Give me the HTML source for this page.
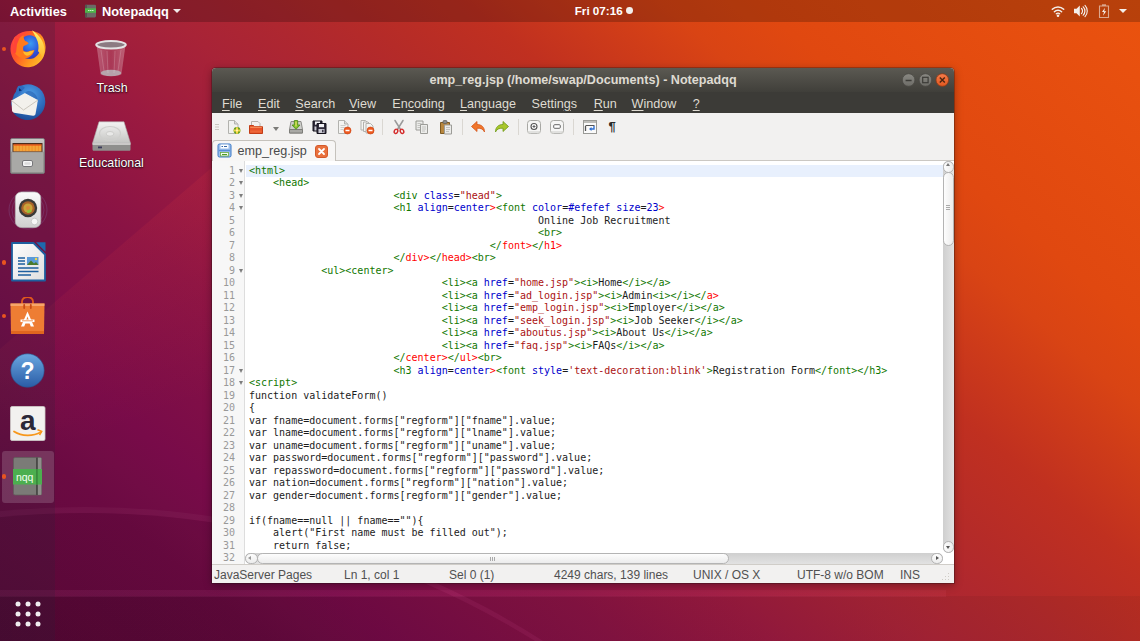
<!DOCTYPE html>
<html lang="en">
<head>
<meta charset="utf-8">
<title>emp_reg.jsp (/home/swap/Documents) - Notepadqq</title>
<style>
*{box-sizing:border-box;margin:0;padding:0}
html,body{width:1140px;height:641px;overflow:hidden}
body{position:relative;font-family:"Liberation Sans","DejaVu Sans",sans-serif;font-size:12px;color:#fff;
 background:#8a1646;}
#wall{position:absolute;left:0;top:0;width:1140px;height:641px;
 background:
  linear-gradient(40deg,#5c083a 0%,#62093d 5.500%,#6b0a42 14%,#710c45 17%,#780b49 20.500%,#8a1344 32.500%,#9b1a40 40.500%,#9e1c3e 42%,#a82337 48%,#ae2730 53%,#b52b28 58%,#c03020 64.500%,#d94414 74.600%,#e04810 79.600%,#e8500f 95%,#ea530e 100%);}
#facet{position:absolute;left:0;top:160px;width:216px;height:340px;clip-path:polygon(216px 4px,0 189px,0 340px,216px 300px);background:linear-gradient(160deg,rgba(255,70,60,.10) 20%,rgba(255,70,60,0) 75%)}
#arc{position:absolute;left:-765px;top:507px;width:1700px;height:1700px;border-radius:50%;background:linear-gradient(90deg,rgba(20,0,10,.07) 0,rgba(20,0,10,.07) 980px,rgba(20,0,10,0) 1160px);border-top:6px solid rgba(255,110,190,.09)}
#band{position:absolute;left:0;top:596px;width:1140px;height:45px;background:linear-gradient(90deg,rgba(0,0,0,.11),rgba(0,0,0,.05))}
#stripe{position:absolute;left:0;top:590px;width:946px;height:7px;background:linear-gradient(90deg,rgba(255,120,200,.08),rgba(255,110,150,.07))}
#topbar{position:absolute;left:0;top:0;width:1140px;height:22px;background:rgba(0,0,0,.21);font-weight:bold;font-size:12.8px;line-height:22px;white-space:nowrap}
#topbar span{position:absolute;top:1px}
#dock{position:absolute;left:0;top:22px;width:55px;height:619px;background:rgba(40,35,55,.2)}
.dk{position:absolute;left:10px;width:36px;height:36px}
.dot{position:absolute;left:1.700px;width:4.600px;height:4.600px;border-radius:50%;background:#e95420}
.desk{position:absolute;width:110px;text-align:center;font-size:12.4px;color:#fff;text-shadow:0 1px 2px rgba(0,0,0,.8),0 0 1px rgba(0,0,0,.8)}
#win{position:absolute;left:212px;top:68px;width:742px;height:515px;background:#f2f1f0;border-radius:4px 4px 0 0;box-shadow:0 2px 9px rgba(0,0,0,.35),0 0 0 1px rgba(40,20,20,.3);overflow:hidden;color:#3c3c3c}
#title{position:absolute;left:0;top:0;width:742px;height:24px;background:linear-gradient(#5b5952,#403f3a);color:#dfdbd2;font-weight:bold;font-size:12.6px;line-height:24px;text-align:center;white-space:nowrap}
#menu{position:absolute;left:0;top:24px;width:742px;height:21px;background:#3c3b37;color:#dfdbd2;font-size:12.6px;line-height:20px;white-space:nowrap}
#menu span{position:absolute;top:1.700px}
#menu u{text-decoration:underline;text-underline-offset:2px}
#tool{position:absolute;left:0;top:45px;width:742px;height:27px;background:#f2f1f0}
#tabs{position:absolute;left:0;top:72px;width:742px;height:21px;background:#f2f1f0;border-bottom:1px solid #cbc8c3}
#tab{position:absolute;left:0px;top:0px;width:124px;height:21px;background:#f7f6f5;border:1px solid #c5c2bc;border-bottom:none;border-radius:4px 4px 0 0;font-size:12.6px;line-height:20px;color:#4a4a4a}
#ed{position:absolute;left:0;top:93px;width:742px;height:403px;background:#fff;overflow:hidden}
#gut{position:absolute;left:0;top:0;width:33px;height:403px;background:#f7f7f7;border-right:1px solid #ddd}
pre{font-family:"DejaVu Sans Mono","Liberation Mono",monospace;font-size:10px;line-height:12.5px}
#ln{position:absolute;left:0;top:3.5px;width:23px;text-align:right;color:#999}
#code{position:absolute;left:37px;top:3.5px;color:#1c1c1c}
#status{position:absolute;left:0;top:496px;width:742px;height:19px;background:#f2f1f0;border-top:1px solid #d0cdc8;font-size:12px;line-height:17px;color:#505050;white-space:nowrap}
#status span{position:absolute;top:1.500px}

#cur{position:absolute;left:34px;top:4px;width:697px;height:12px;background:#e8f0fd}
.fold{position:absolute;left:26.800px;width:0;height:0;margin-top:-.7px;border-left:2.200px solid transparent;border-right:2.200px solid transparent;border-top:4px solid #7d7d7d}
#vs{position:absolute;left:731px;top:0;width:11px;height:392px;background:linear-gradient(90deg,#cfcfcf,#e2e2e2);border-radius:5px}
#vs i,#hs i{position:absolute;display:block;background:linear-gradient(90deg,#fdfdfd,#ececec);border:1px solid #b4b4b4;border-radius:5.5px}
#hs{z-index:3;position:absolute;left:33px;top:392px;width:698px;height:11px;background:linear-gradient(#cfcfcf,#e2e2e2);border-radius:5px}
#hs i{background:linear-gradient(#fdfdfd,#ececec)}
.ar{position:absolute;width:0;height:0;border:2.5px solid transparent}
.ti{position:absolute}
.t{color:#170}.a{color:#00c}.s{color:#a11}.e{color:#f00}
</style>
</head>
<body>
<div id="wall"></div>
<div id="facet"></div><div id="arc"></div><div id="band"></div><div id="stripe"></div>
<div id="topbar">
 <span style="left:10px">Activities</span>
 <span style="left:102px">Notepadqq</span>
 <span style="left:574.700px;top:0;font-size:11.700px">Fri 07:16</span>
 <svg style="position:absolute;left:84px;top:4px" width="13" height="14" viewBox="0 0 13 14"><rect x="1" y=".8" width="11" height="12.600" rx="1.300" fill="#6b6b66"/><rect x="1" y=".8" width="2" height="12.600" fill="#55554f"/><rect x="1" y="4.300" width="11" height="4.500" fill="#4fb54a"/><path d="M4 6.500h5.500" stroke="#c9f0c4" stroke-width="1" stroke-dasharray="1.500 .5"/></svg>
 <i style="position:absolute;left:172.800px;top:9.300px;width:0;height:0;border-left:4.200px solid transparent;border-right:4.200px solid transparent;border-top:4.500px solid #f0eaea"></i>
 <i style="position:absolute;left:625.800px;top:7.100px;width:6.800px;height:6.800px;border-radius:50%;background:#f2efec"></i>
 <svg style="position:absolute;left:1051px;top:4px" width="14" height="14" viewBox="0 0 14 14"><g fill="none" stroke="#f4efea" stroke-linecap="round"><path d="M1.300 5.300a8 8 0 0 1 11.400 0" stroke-width="1.500"/><path d="M3.400 7.700a5 5 0 0 1 7.200 0" stroke-width="1.500"/><path d="M5.300 9.800a2.400 2.400 0 0 1 3.400 0" stroke-width="1.300"/></g><circle cx="7" cy="11.800" r="1.300" fill="#f4efea"/></svg>
 <svg style="position:absolute;left:1073px;top:4px" width="15" height="14" viewBox="0 0 15 14"><path d="M1 4.800h2.500l3.300-3.300v11l-3.300-3.300h-2.500z" fill="#f4efea"/><g fill="none" stroke="#f4efea" stroke-linecap="round"><path d="M8.500 4.500a3.500 3.500 0 0 1 0 5" stroke-width="1.200"/><path d="M10.200 2.800a6 6 0 0 1 0 8.400" stroke-width="1.200"/><path d="M12 1.300a8.300 8.300 0 0 1 0 11.400" stroke-width="1.100"/></g></svg>
 <svg style="position:absolute;left:1098px;top:3px" width="12" height="16" viewBox="0 0 12 16"><path d="M1.500 3h9v11.500h-9z" fill="none" stroke="#dca78e" stroke-width="1.100"/><path d="M4 1.300h4v1.700h-4z" fill="#dca78e"/><path d="M7 4.800l-3 4.300h2l-1 3.700 3.200-4.600h-2z" fill="#f8f3ef"/></svg>
 <i style="position:absolute;left:1119px;top:8.800px;width:0;height:0;border-left:4.200px solid transparent;border-right:4.200px solid transparent;border-top:4.600px solid #f4efea"></i>
</div>
<div id="dock">
<svg style="position:absolute;left:9.500px;top:8.200px" width="37" height="38.500" viewBox="1 0 37 34.800" preserveAspectRatio="none"><defs><linearGradient id="ffo" x1="0" y1=".2" x2="1" y2=".8"><stop offset="0" stop-color="#ff3647"/><stop offset=".35" stop-color="#ff5a26"/><stop offset=".7" stop-color="#ff9a1f"/><stop offset="1" stop-color="#ffc22e"/></linearGradient>
<radialGradient id="ffb" cx=".55" cy=".35" r=".75"><stop offset="0" stop-color="#3c9cf2"/><stop offset=".55" stop-color="#2c55dc"/><stop offset="1" stop-color="#452a9e"/></radialGradient>
<linearGradient id="ffy" x1="0" y1="0" x2="0" y2="1"><stop offset="0" stop-color="#fff26a"/><stop offset="1" stop-color="#ffb52c"/></linearGradient></defs>
<path d="M6 6c-3.800 4-5.500 9.500-4 15 2.200 8.500 10.500 14 19.500 12.500 9-1.500 15.500-9.500 15-18.500-.2-3.500-1.300-6.500-3-9-2.500-3-6-4.500-10-5-6.500-.5-12.500 1-17.500 5z" fill="url(#ffo)"/>
<circle cx="20.500" cy="15.500" r="10.800" fill="url(#ffb)"/>
<path d="M23 .3c5 2.500 9.500 7 11.500 12.500 1.500 4.500 1.200 9-1 13-1-3-2.500-5-4.500-6.500 1-4 .5-8-1.500-11.500-1.200-2.500-2.800-5-4.500-7.500z" fill="url(#ffy)"/>
<path d="M6 6c1.500.2 3 .8 4.200 1.800 1.300-1.500 2.800-2.500 4.500-3-.3 2 .2 3.800 1.500 5.200 1.300.3 2.500 1 3.500 2-1.500 1.500-3.500 2-5 2.500-.8 1.500-.8 3 0 4.500 2.200.8 4.500.8 6.500-.3l4.300-.7c-1 4-4.500 7-9 7.500-5 .5-9.500-2-11.500-6.500-1.500-4-1.200-9 1-13z" fill="#ff7a1c"/>
<path d="M6 6c1.500.2 3 .8 4.200 1.800l-2.200 5-1 7.500-2.200 1c-1.300-5-1-10.500 1.200-15.300z" fill="#ff3d3d" opacity=".9"/>
<path d="M14 19.500c2.500 1 5 1 7-.3l4-.7c-1.500 2.800-4 4.500-7 4.700-1.800 0-3.200-1.200-4-3.700z" fill="#ffbf2e"/></svg>
<svg style="position:absolute;left:8.8px;top:60.5px" width="38" height="38" viewBox="0 0 38 38"><defs><radialGradient id="tbg" cx=".55" cy=".3" r=".85"><stop offset="0" stop-color="#4f9fe8"/><stop offset=".55" stop-color="#2b69ba"/><stop offset="1" stop-color="#143a80"/></radialGradient></defs>
<path d="M10 4c6-4.500 15-3.500 20.500 1.500 6.500 6 7.500 15.500 3 23-3 5-8 8-14 8.500-6 .3-11.500-2.500-15-7l-2.500-9.500 3-9z" fill="url(#tbg)"/>
<path d="M9 3.200c2.500-.8 5-.2 6.800 1.500l-4.300 4.800-4 3.500c-1-3.500-.5-7 1.500-9.800z" fill="#2d6cc0"/>
<path d="M10 5l2.800 2.500-2.800.8z" fill="#0f2f6a"/>
<path d="M2.500 17.500l13.500-7.500 13 7-2.500 14c-.3 1.300-1.200 1.900-2.500 1.700l-19-3c-1.300-.3-1.900-1.100-2-2.400z" fill="#f3f1ec"/>
<path d="M2.500 17.500l12 9.500 14.500-10" fill="none" stroke="#cbc6bd" stroke-width="1"/>
<path d="M16 10l13 7-1 6c2-5 .5-11-4.500-14-2.500-1.500-5.500-1.500-7.500 1z" fill="#2a63b0" opacity=".6"/></svg>
<svg style="position:absolute;left:10.3px;top:115.5px" width="35" height="36" viewBox="0 0 35 36"><defs><linearGradient id="flg" x1="0" y1="0" x2="0" y2="1"><stop offset="0" stop-color="#c9c9c6"/><stop offset="1" stop-color="#8e8e8b"/></linearGradient></defs>
<rect x=".5" y=".5" width="34" height="35" rx="1.500" fill="url(#flg)" stroke="#77777a" stroke-width=".8"/>
<rect x="2.500" y="5" width="30" height="9" fill="#4c2b1b"/>
<rect x="3.500" y="6.500" width="28" height="7" fill="#f0902c"/><path d="M3.500 8h28M3.500 10h28M3.500 12h28" stroke="#f6c04a" stroke-width=".9" stroke-dasharray="2 1.200"/>
<path d="M3.500 7h28" stroke="#e8501c" stroke-width="1.200"/>
<rect x="1.500" y="14" width="32" height="20.500" fill="#a9a9a6" stroke="#8a8a88" stroke-width=".6"/>
<rect x="12.500" y="22.500" width="10" height="6" rx="1.500" fill="#f6f6f6" stroke="#77777a" stroke-width="1"/><rect x="14.500" y="24.300" width="6" height="2.400" fill="#dcdcdc"/></svg>
<svg style="position:absolute;left:8px;top:166.7px" width="40" height="42" viewBox="0 0 40 42"><defs><linearGradient id="rbg" x1="0" y1="0" x2="0" y2="1"><stop offset="0" stop-color="#fbfbfb"/><stop offset="1" stop-color="#cfcfcf"/></linearGradient></defs>
<circle cx="20" cy="21" r="19" fill="none" stroke="#8f8fd0" stroke-width=".6" opacity=".35"/><circle cx="20" cy="21" r="16" fill="none" stroke="#8f8fd0" stroke-width=".6" opacity=".35"/>
<rect x="7.300" y="3" width="25.500" height="35.500" rx="6" fill="url(#rbg)" stroke="#b5b5b5" stroke-width=".7"/>
<circle cx="20" cy="19" r="9.200" fill="#3a3a38"/><circle cx="20" cy="19" r="6.800" fill="#a9632a"/><circle cx="20" cy="19" r="4.600" fill="#c9a43a"/><path d="M20 19l4 3a5 5 0 0 1-5 2z" fill="#8fc43a"/><circle cx="20" cy="19" r="2" fill="#d98a3a"/>
<circle cx="26.500" cy="32.500" r="3.300" fill="#f7f7f7" stroke="#bdbdbd" stroke-width=".7"/></svg>
<svg style="position:absolute;left:10.5px;top:220.3px" width="35.5" height="40" viewBox="0 0 35.5 40"><defs><linearGradient id="wrg" x1="0" y1="0" x2="1" y2="1"><stop offset="0" stop-color="#fdfdfd"/><stop offset="1" stop-color="#dfdfdf"/></linearGradient></defs><path d="M1 1h21.500l11.500 11.500v26h-33z" fill="url(#wrg)" stroke="#1d5f9f" stroke-width="1.800" stroke-linejoin="round"/>
<path d="M25 .3h9.500v9.500z" fill="#1d6aad"/>
<rect x="16" y="15" width="11.500" height="8" fill="#5a9bd8"/><path d="M16 23l4-4.500 3 3 2-1.500 2.500 3z" fill="#4a7a2c"/><circle cx="25" cy="17" r="1.200" fill="#f3d64a"/>
<path d="M7 16h7M7 19h7M7 22h7" stroke="#1d5f9f" stroke-width="1.300"/><path d="M7 26h20.500M7 29.500h20.500M7 33h13" stroke="#1d5f9f" stroke-width="1.500"/></svg>
<svg style="position:absolute;left:10.3px;top:275px" width="35" height="37.5" viewBox="0 0 35 37.5"><path d="M12 9v-4.500a5.500 4.500 0 0 1 11 0v4.500" fill="none" stroke="#e0581c" stroke-width="1.800"/>
<path d="M.5 6.500h34l-.5 30.500h-33z" fill="#ee7d33"/><path d="M.5 6.500h34l-.1 2.500h-33.800z" fill="#f7a56a"/><path d="M1 34h33v3h-33z" fill="#e0661f"/>
<path d="M14.200 8v3M20.800 8v3" stroke="#c84a14" stroke-width="1.800" stroke-linecap="round"/>
<path d="M17.500 14.500l-6.500 15h3.200l1.200-3h4.200l1.200 3h3.200z" fill="#fff"/><path d="M17.500 19.500l-1.400 4h2.800z" fill="#ee7d33"/><path d="M10.500 23.800h14" stroke="#fff" stroke-width="2.600"/><path d="M12 23.800h11" stroke="#ee7d33" stroke-width=".8"/></svg>
<svg style="position:absolute;left:10.1px;top:331.3px" width="35" height="35" viewBox="0 0 35 35"><defs><linearGradient id="hpg" x1="0" y1="0" x2="0" y2="1"><stop offset="0" stop-color="#6aa7e0"/><stop offset="1" stop-color="#2a5ca6"/></linearGradient></defs>
<circle cx="17.500" cy="17.500" r="16.700" fill="url(#hpg)" stroke="#2a558f" stroke-width=".6"/>
<text x="17.500" y="25.500" text-anchor="middle" font-family="Liberation Sans,DejaVu Sans,sans-serif" font-weight="bold" font-size="23" fill="#fff">?</text></svg>
<svg style="position:absolute;left:10px;top:383.5px" width="35.5" height="35" viewBox="0 0 35.5 35"><rect x=".5" y=".5" width="34.500" height="34" rx="1.500" fill="#f2f1ef" stroke="#cfcdc9" stroke-width=".8"/>
<text x="17.700" y="24" text-anchor="middle" font-family="Liberation Sans,DejaVu Sans,sans-serif" font-weight="bold" font-size="28" fill="#2b2838">a</text>
<path d="M4 25.500c8 5 19 5 27 .5" fill="none" stroke="#f7981d" stroke-width="1.800" stroke-linecap="round"/><path d="M27.500 23.800l4.200 1.500-2.200 3.700" fill="none" stroke="#f7981d" stroke-width="1.500"/></svg>
<div style="position:absolute;left:1.500px;top:428.5px;width:52px;height:52px;border-radius:3px;background:rgba(255,255,255,.16)"></div>
<svg style="position:absolute;left:13px;top:435px" width="29" height="38.5" viewBox="0 0 29 38.5"><rect x=".5" y=".5" width="28" height="37.500" rx="1.500" fill="#7b7b77" stroke="#5e5e5a" stroke-width=".7"/><rect x="25" y=".8" width="3.300" height="37" fill="#8f8f8b"/><rect x="23" y=".5" width="1.800" height="37.500" fill="#4a4a47"/>
<rect x="0" y="12" width="29" height="15.500" fill="#4caf4f"/><rect x="23" y="12" width="1.800" height="15.500" fill="#3a8a3d"/>
<text x="11.700" y="23.800" text-anchor="middle" font-family="Liberation Sans,DejaVu Sans,sans-serif" font-size="10.500" fill="#f4fff2">nqq</text></svg>
<i class="dot" style="top:24.7px"></i>
<i class="dot" style="top:238.3px"></i>
<i class="dot" style="top:291.7px"></i>
<i class="dot" style="top:452px"></i>
<svg style="position:absolute;left:14.5px;top:579.2px" width="26" height="26" viewBox="0 0 26 26"><circle cx="3" cy="3" r="2.500" fill="#f1edf0"/><circle cx="3" cy="13" r="2.500" fill="#f1edf0"/><circle cx="3" cy="23" r="2.500" fill="#f1edf0"/><circle cx="13" cy="3" r="2.500" fill="#f1edf0"/><circle cx="13" cy="13" r="2.500" fill="#f1edf0"/><circle cx="13" cy="23" r="2.500" fill="#f1edf0"/><circle cx="23" cy="3" r="2.500" fill="#f1edf0"/><circle cx="23" cy="13" r="2.500" fill="#f1edf0"/><circle cx="23" cy="23" r="2.500" fill="#f1edf0"/></svg>
</div>
<svg style="position:absolute;left:94.5px;top:39.5px" width="32" height="38" viewBox="0 0 32 38"><defs><linearGradient id="trg" x1="0" y1="0" x2="1" y2="0"><stop offset="0" stop-color="#fff" stop-opacity=".28"/><stop offset=".5" stop-color="#fff" stop-opacity=".12"/><stop offset="1" stop-color="#fff" stop-opacity=".3"/></linearGradient></defs>
<path d="M1.500 5l4 29c.5 2.500 20.500 2.500 21 0l4-29z" fill="url(#trg)"/>
<ellipse cx="16" cy="33" rx="10.300" ry="3.300" fill="#b9b4b8" opacity=".85"/>
<ellipse cx="16" cy="4.800" rx="14.800" ry="3.800" fill="#8c7a82" stroke="#e4e2e4" stroke-width="2"/>
<path d="M6 10l3 21M12 11l1 22M20 11l-1 22M26 10l-3 21" stroke="#fff" stroke-opacity=".18" stroke-width="1"/></svg><svg style="position:absolute;left:92px;top:121.3px" width="39" height="30.5" viewBox="0 0 39 30.5"><defs><linearGradient id="hdg" x1="0" y1="0" x2="0" y2="1"><stop offset="0" stop-color="#f4f4f3"/><stop offset="1" stop-color="#c4c4c2"/></linearGradient></defs>
<path d="M7 .8h25l6.500 21.500h-38z" fill="url(#hdg)" stroke="#a9a9a7" stroke-width=".6"/>
<path d="M.5 22.300h38v6c0 1-.5 1.500-1.500 1.500h-35c-1 0-1.500-.5-1.500-1.500z" fill="#8f8f8d"/><path d="M.5 22.300h38v1.500h-38z" fill="#dededc"/>
<ellipse cx="18" cy="12.500" rx="10.500" ry="7" fill="none" stroke="#cfcfcd" stroke-width="1.200"/><ellipse cx="18" cy="12.800" rx="3.800" ry="2.300" fill="#e9e9e8" stroke="#c6c6c4" stroke-width=".8"/>
<rect x="6" y="25.500" width="4" height="1.800" fill="#3a3a5a"/></svg>
<div class="desk" style="left:57px;top:81px">Trash</div>
<div class="desk" style="left:56.500px;top:156px">Educational</div>
<div id="win">
 <div id="title">emp_reg.jsp (/home/swap/Documents) - Notepadqq
  <svg style="position:absolute;left:688px;top:4px" width="52" height="16" viewBox="0 0 52 16">
   <defs><linearGradient id="gb" x1="0" y1="0" x2="0" y2="1"><stop offset="0" stop-color="#8a8983"/><stop offset="1" stop-color="#6d6c67"/></linearGradient>
   <linearGradient id="go" x1="0" y1="0" x2="0" y2="1"><stop offset="0" stop-color="#f47b4a"/><stop offset="1" stop-color="#e2581f"/></linearGradient></defs>
   <circle cx="8.600" cy="8" r="6.300" fill="url(#gb)" stroke="#4b4a45" stroke-width=".8"/><path d="M5.600 8.500h6" stroke="#3d3c38" stroke-width="1.300"/>
   <circle cx="25.400" cy="8" r="6.300" fill="url(#gb)" stroke="#4b4a45" stroke-width=".8"/><rect x="22.700" y="5.300" width="5.400" height="5.400" fill="none" stroke="#3d3c38" stroke-width="1.200"/>
   <circle cx="42.300" cy="8" r="6.300" fill="url(#go)" stroke="#8f3a16" stroke-width=".8"/><path d="M39.800 5.500l5 5M44.800 5.500l-5 5" stroke="#4a2410" stroke-width="1.400"/>
  </svg></div>
 <div id="menu">
  <span style="left:10px"><u>F</u>ile</span>
  <span style="left:46px"><u>E</u>dit</span>
  <span style="left:83.300px"><u>S</u>earch</span>
  <span style="left:136.900px"><u>V</u>iew</span>
  <span style="left:180.300px">En<u>c</u>oding</span>
  <span style="left:248px"><u>L</u>anguage</span>
  <span style="left:319.500px">Settin<u>g</u>s</span>
  <span style="left:381.700px"><u>R</u>un</span>
  <span style="left:419.600px"><u>W</u>indow</span>
  <span style="left:480.700px"><u>?</u></span>
 </div>
 <div id="tool">
<div style="position:absolute;left:3px;top:11px;width:4px;height:1px;background:#c9c6c0;box-shadow:0 2.5px 0 #c9c6c0,0 5px 0 #c9c6c0"></div>
<svg class="ti" style="left:13.5px;top:5.7px" width="16" height="16" viewBox="0 0 16 16"><path d="M2.5 1.5h6l3.5 3.5v9.5h-9.500z" fill="#f1f1ef" stroke="#b2b2ae"/><path d="M8.500 1.500v3.500h3.500" fill="#dcdcd8" stroke="#b2b2ae"/><circle cx="11" cy="11.500" r="3.400" fill="#5a9a1c"/><path d="M11 8.200v6.600M7.700 11.500h6.600" stroke="#f3d64a" stroke-width="2.200"/><circle cx="11" cy="11.500" r="1.100" fill="#fff7b0"/></svg>
<svg class="ti" style="left:36.3px;top:5.7px" width="16" height="16" viewBox="0 0 16 16"><path d="M3.500 2.500h6.500l2 2v5h-8.500z" fill="#f3f1ee" stroke="#b5b2ac"/><path d="M1.500 6.500h4l1 1.200h8v6.800h-13z" fill="#e8542a" stroke="#c23d17"/><path d="M2.200 8.300h11.600" stroke="#f58a55" stroke-width="1.200"/><path d="M2.200 12.500h11.600" stroke="#f0703e" stroke-width="2" opacity=".7"/></svg>
<div style="position:absolute;left:61.300px;top:13.500px;width:0;height:0;border-left:3.500px solid transparent;border-right:3.500px solid transparent;border-top:4px solid #7b7b78"></div>
<svg class="ti" style="left:76.0px;top:5.7px" width="16" height="16" viewBox="0 0 16 16"><path d="M3 2.500h10l1.500 8v3.500h-13v-3.500z" fill="#cfcfcc" stroke="#8d8d89"/><path d="M1.500 10.500h13v3.500h-13z" fill="#a9a9a5" stroke="#7d7d79"/><path d="M6.300 1.500h3.400v4.500h2.300l-4 4.300-4-4.300h2.300z" fill="#7fc12a" stroke="#4e8a12" stroke-width=".8"/><path d="M8 2.500v5" stroke="#f1e56a" stroke-width="1.200"/></svg>
<svg class="ti" style="left:99.4px;top:5.7px" width="16" height="16" viewBox="0 0 16 16"><g transform="translate(1.500,1.500)"><path d="M0.500 0.500h9v10h-9z" fill="#2f2b3a" stroke="#15131c"/><rect x="2.500" y="1" width="5" height="3.200" fill="#f1f1f4"/><rect x="2" y="6" width="6" height="4" fill="#c9c9d2"/><rect x="5.600" y="6.800" width="1.400" height="2.500" fill="#2f2b3a"/></g><g transform="translate(5.500,4)"><path d="M0.500 0.500h9v10h-9z" fill="#2f2b3a" stroke="#15131c"/><rect x="2.500" y="1" width="5" height="3.200" fill="#f1f1f4"/><rect x="2" y="6" width="6" height="4" fill="#c9c9d2"/><rect x="5.600" y="6.800" width="1.400" height="2.500" fill="#2f2b3a"/></g></svg>
<svg class="ti" style="left:123.5px;top:5.7px" width="16" height="16" viewBox="0 0 16 16"><path d="M2.500 1.500h6l3.500 3.500v9.500h-9.500z" fill="#f4f4f2" stroke="#b2b2ae"/><path d="M8.500 1.500v3.500h3.500" fill="#dcdcd8" stroke="#b2b2ae"/><path d="M4.500 6.500h5M4.500 8.500h5M4.500 10.500h3" stroke="#c4c4c0" stroke-width=".8"/><circle cx="11.500" cy="11.500" r="3.500" fill="#ee5a1f" stroke="#c9400f" stroke-width=".6"/><path d="M9.500 11.500h4" stroke="#fff" stroke-width="1.500"/></svg>
<svg class="ti" style="left:146.6px;top:5.7px" width="16" height="16" viewBox="0 0 16 16"><g transform="translate(1.500,1)"><path d="M0.500 0.500h4.500l2.500 2.500v7h-7z" fill="#f4f4f2" stroke="#b2b2ae"/></g><g transform="translate(4,2.500)"><path d="M0.500 0.500h4.500l2.500 2.500v7h-7z" fill="#f4f4f2" stroke="#b2b2ae"/></g><g transform="translate(6.500,4)"><path d="M0.500 0.500h4.500l2.500 2.500v7h-7z" fill="#f4f4f2" stroke="#b2b2ae"/></g><circle cx="11.500" cy="11.500" r="3.500" fill="#ee5a1f" stroke="#c9400f" stroke-width=".6"/><path d="M9.500 11.500h4" stroke="#fff" stroke-width="1.500"/></svg>
<div style="position:absolute;left:170.3px;top:6px;width:1px;height:16px;background:#dad7d2"></div>
<svg class="ti" style="left:179.0px;top:5.7px" width="16" height="16" viewBox="0 0 16 16"><path d="M4 1.500l5.300 8.500M12 1.500l-5.300 8.500" stroke="#9a9a9a" stroke-width="1.500" stroke-linecap="round"/><ellipse cx="5" cy="12.300" rx="1.700" ry="2.200" fill="none" stroke="#d42a2a" stroke-width="1.400" transform="rotate(25 5 12.300)"/><ellipse cx="11" cy="12.300" rx="1.700" ry="2.200" fill="none" stroke="#d42a2a" stroke-width="1.400" transform="rotate(-25 11 12.300)"/></svg>
<svg class="ti" style="left:202.0px;top:5.7px" width="16" height="16" viewBox="0 0 16 16"><g transform="translate(1.500,1.500)"><path d="M0.500 0.500h7v9h-7z" fill="#ececea" stroke="#9c9c98"/><path d="M2 3h4M2 5h4M2 7h3" stroke="#b9b9b5" stroke-width=".8"/></g><g transform="translate(6,5)"><path d="M0.500 0.500h7v9h-7z" fill="#ececea" stroke="#9c9c98"/><path d="M2 3h4M2 5h4M2 7h3" stroke="#b9b9b5" stroke-width=".8"/></g></svg>
<svg class="ti" style="left:225.8px;top:5.7px" width="16" height="16" viewBox="0 0 16 16"><path d="M2.500 3.500h9v11h-9z" fill="#b8873f" stroke="#7d5a22"/><rect x="5" y="1.500" width="4" height="3" rx="1" fill="#8b8b88" stroke="#5f5f5c" stroke-width=".7"/><g transform="translate(6,5.500)"><path d="M0.500 0.500h7v9h-7z" fill="#ececea" stroke="#9c9c98"/><path d="M2 3h4M2 5h4M2 7h3" stroke="#b9b9b5" stroke-width=".8"/></g></svg>
<div style="position:absolute;left:249.6px;top:6px;width:1px;height:16px;background:#dad7d2"></div>
<svg class="ti" style="left:258.0px;top:5.7px" width="16" height="16" viewBox="0 0 16 16"><path d="M1.500 7.500l5.500-5v3c4.500 0 7.500 2.500 7.500 7.500c-1.300-2.800-3.500-4-7.500-3.800v3.300z" fill="#f0762b" stroke="#d4551a" stroke-width=".8" stroke-linejoin="round"/></svg>
<svg class="ti" style="left:281.7px;top:5.7px" width="16" height="16" viewBox="0 0 16 16"><path d="M14.500 7.500l-5.500-5v3c-4.500 0-7.500 2.500-7.500 7.500c1.300-2.800 3.500-4 7.500-3.800v3.300z" fill="#a9c62c" stroke="#6f9a16" stroke-width=".8" stroke-linejoin="round"/></svg>
<div style="position:absolute;left:305.7px;top:6px;width:1px;height:16px;background:#dad7d2"></div>
<svg class="ti" style="left:313.5px;top:5.7px" width="16" height="16" viewBox="0 0 16 16"><rect x="1.500" y="1.500" width="13" height="13" rx="3" fill="#f6f6f5" stroke="#a8a8a4"/><rect x="1.500" y="12" width="13" height="2.500" rx="1.200" fill="#d8d8d5" opacity=".7"/><circle cx="8" cy="7.500" r="3" fill="#fff" stroke="#555" stroke-width="1.100"/><path d="M8 6v3M6.500 7.500h3" stroke="#555" stroke-width=".9"/></svg>
<svg class="ti" style="left:337.2px;top:5.7px" width="16" height="16" viewBox="0 0 16 16"><rect x="1.500" y="1.500" width="13" height="13" rx="3" fill="#f6f6f5" stroke="#a8a8a4"/><rect x="1.500" y="12" width="13" height="2.500" rx="1.200" fill="#d8d8d5" opacity=".7"/><rect x="4.700" y="5.700" width="6.600" height="3.600" rx="1" fill="#fff" stroke="#666" stroke-width="1"/></svg>
<div style="position:absolute;left:361.4px;top:6px;width:1px;height:16px;background:#dad7d2"></div>
<svg class="ti" style="left:370.0px;top:5.7px" width="16" height="16" viewBox="0 0 16 16"><rect x="1.500" y="1.500" width="13" height="13" fill="#fafafa" stroke="#9a9a96"/><path d="M2 3h12" stroke="#bdbdb9" stroke-width="2"/><path d="M3.500 6.500h9" stroke="#555" stroke-width="1.200"/><path d="M3.500 7v5" stroke="#555" stroke-width="1.300"/><path d="M12 7v3h-3.500" stroke="#2f6fd0" stroke-width="1.400" fill="none"/><path d="M9.500 8l-2.500 2 2.500 2z" fill="#2f6fd0"/></svg>
<span style="position:absolute;left:396.500px;top:5px;font:bold 13px/17px 'Liberation Sans','DejaVu Sans',sans-serif;color:#2a2a2a">¶</span>
</div>
 <div id="tabs"><div id="tab"><svg style="position:absolute;left:4px;top:2px" width="15" height="15" viewBox="0 0 15 15"><rect x="1" y="1" width="13" height="13" rx="1.500" fill="#9fc0ec" stroke="#3b78c6"/><rect x="3.500" y="1.500" width="8" height="4" fill="#fff"/><path d="M4.500 3.500h1.500M7 3.500h3" stroke="#3465a4" stroke-width="1"/><path d="M2 7.500h11" stroke="#5a8fd6" stroke-width="1.600"/><rect x="3.500" y="9.500" width="8" height="3.500" fill="#f4fbf0" stroke="#6cae3c" stroke-width=".8"/><path d="M5 11.500h5" stroke="#4e9a26" stroke-width="1"/></svg><span style="position:absolute;left:24.500px;top:0">emp_reg.jsp</span><svg style="position:absolute;left:102px;top:4px" width="13" height="13" viewBox="0 0 13 13"><rect x=".5" y=".5" width="12" height="12" rx="2.500" fill="#e9713d" stroke="#d4592a"/><path d="M4 4l5 5M9 4l-5 5" stroke="#fff" stroke-width="1.800" stroke-linecap="round"/></svg></div></div>
 <div id="ed">
  <div id="cur"></div>
  <div id="gut"></div><div class="fold" style="top:8.5px"></div><div class="fold" style="top:21.0px"></div><div class="fold" style="top:33.5px"></div><div class="fold" style="top:46.0px"></div><div class="fold" style="top:108.5px"></div><div class="fold" style="top:208.5px"></div><div class="fold" style="top:221.0px"></div>
  <div id="vs"><i style="left:0;top:0;width:11px;height:12px"></i><i style="left:0;top:11px;width:11px;height:74px"></i><i style="left:0;top:380px;width:11px;height:12px"></i>
   <b class="ar" style="left:3px;top:2px;border-bottom:3px solid #777;border-top:none"></b><b class="ar" style="left:3px;top:385px;border-top:3px solid #555;border-bottom:none"></b>
   <b style="position:absolute;left:3px;top:44px;width:4px;height:1px;background:#aaa;box-shadow:0 2px 0 #aaa,0 4px 0 #aaa"></b></div>
  <div id="hs"><i style="left:0;top:0;width:13px;height:11px"></i><i style="left:12px;top:0;width:472px;height:11px"></i><i style="left:686px;top:0;width:12px;height:11px"></i>
   <b class="ar" style="left:3px;top:3px;border-right:3px solid #999;border-left:none"></b><b class="ar" style="left:691px;top:3px;border-left:3px solid #555;border-right:none"></b>
   <b style="position:absolute;left:245px;top:4px;width:1px;height:4px;background:#aaa;box-shadow:2px 0 0 #aaa,4px 0 0 #aaa"></b></div>
<pre id="ln">1
2
3
4
5
6
7
8
9
10
11
12
13
14
15
16
17
18
19
20
21
22
23
24
25
26
27
28
29
30
31
32</pre>
<pre id="code"><span class="t">&lt;html&gt;</span>
    <span class="t">&lt;head&gt;</span>
                        <span class="t">&lt;div</span> <span class="a">class</span>=<span class="s">"head"</span><span class="t">&gt;</span>
                        <span class="t">&lt;h1</span> <span class="a">align</span>=<span class="a">center</span><span class="e">&gt;</span><span class="t">&lt;font</span> <span class="a">color</span>=<span class="a">#efefef</span> <span class="a">size</span>=<span class="a">23</span><span class="e">&gt;</span>
                                                Online Job Recruitment
                                                <span class="t">&lt;br&gt;</span>
                                        <span class="t">&lt;/</span><span class="e">font&gt;</span><span class="t">&lt;/</span><span class="e">h1&gt;</span>
                        <span class="t">&lt;/</span><span class="e">div&gt;</span><span class="t">&lt;/</span><span class="e">head&gt;</span><span class="t">&lt;br&gt;</span>
            <span class="t">&lt;ul&gt;&lt;center&gt;</span>
                                <span class="t">&lt;li&gt;&lt;a</span> <span class="a">href</span>=<span class="s">"home.jsp"</span><span class="t">&gt;&lt;i&gt;</span>Home<span class="t">&lt;/i&gt;&lt;/a&gt;</span>
                                <span class="t">&lt;li&gt;&lt;a</span> <span class="a">href</span>=<span class="s">"ad_login.jsp"</span><span class="t">&gt;&lt;i&gt;</span>Admin<span class="t">&lt;i&gt;&lt;/i&gt;&lt;/</span><span class="e">a&gt;</span>
                                <span class="t">&lt;li&gt;&lt;a</span> <span class="a">href</span>=<span class="s">"emp_login.jsp"</span><span class="t">&gt;&lt;i&gt;</span>Employer<span class="t">&lt;/i&gt;&lt;/a&gt;</span>
                                <span class="t">&lt;li&gt;&lt;a</span> <span class="a">href</span>=<span class="s">"seek_login.jsp"</span><span class="t">&gt;&lt;i&gt;</span>Job Seeker<span class="t">&lt;/i&gt;&lt;/a&gt;</span>
                                <span class="t">&lt;li&gt;&lt;a</span> <span class="a">href</span>=<span class="s">"aboutus.jsp"</span><span class="t">&gt;&lt;i&gt;</span>About Us<span class="t">&lt;/i&gt;&lt;/a&gt;</span>
                                <span class="t">&lt;li&gt;&lt;a</span> <span class="a">href</span>=<span class="s">"faq.jsp"</span><span class="t">&gt;&lt;i&gt;</span>FAQs<span class="t">&lt;/i&gt;&lt;/a&gt;</span>
                        <span class="t">&lt;/</span><span class="e">center&gt;</span><span class="t">&lt;/</span><span class="e">ul&gt;</span><span class="t">&lt;br&gt;</span>
                        <span class="t">&lt;h3</span> <span class="a">align</span>=<span class="a">center</span><span class="e">&gt;</span><span class="t">&lt;font</span> <span class="a">style</span>=<span class="s">'text-decoration:blink'</span><span class="t">&gt;</span>Registration Form<span class="t">&lt;/font&gt;&lt;/h3&gt;</span>
<span class="t">&lt;script&gt;</span>
function validateForm()
{
var fname=document.forms["regform"]["fname"].value;
var lname=document.forms["regform"]["lname"].value;
var uname=document.forms["regform"]["uname"].value;
var password=document.forms["regform"]["password"].value;
var repassword=document.forms["regform"]["password"].value;
var nation=document.forms["regform"]["nation"].value;
var gender=document.forms[regform"]["gender"].value;

if(fname==null || fname==""){
    alert("First name must be filled out");
    return false;
}</pre>
 </div>
 <div id="status">
  <span style="left:2px">JavaServer Pages</span>
  <span style="left:132px">Ln 1, col 1</span>
  <span style="left:237px">Sel 0 (1)</span>
  <span style="left:342px">4249 chars, 139 lines</span>
  <span style="left:481px">UNIX / OS X</span>
  <span style="left:585px">UTF-8 w/o BOM</span>
  <span style="left:688px">INS</span>
  <b style="position:absolute;left:736px;top:14px;width:1px;height:1px;background:#cfccc6;box-shadow:-3px 0 0 #cfccc6,0 -3px 0 #cfccc6,-6px 0 0 #cfccc6,-3px -3px 0 #cfccc6,0 -6px 0 #cfccc6"></b>
 </div>
</div>
</body>
</html>
